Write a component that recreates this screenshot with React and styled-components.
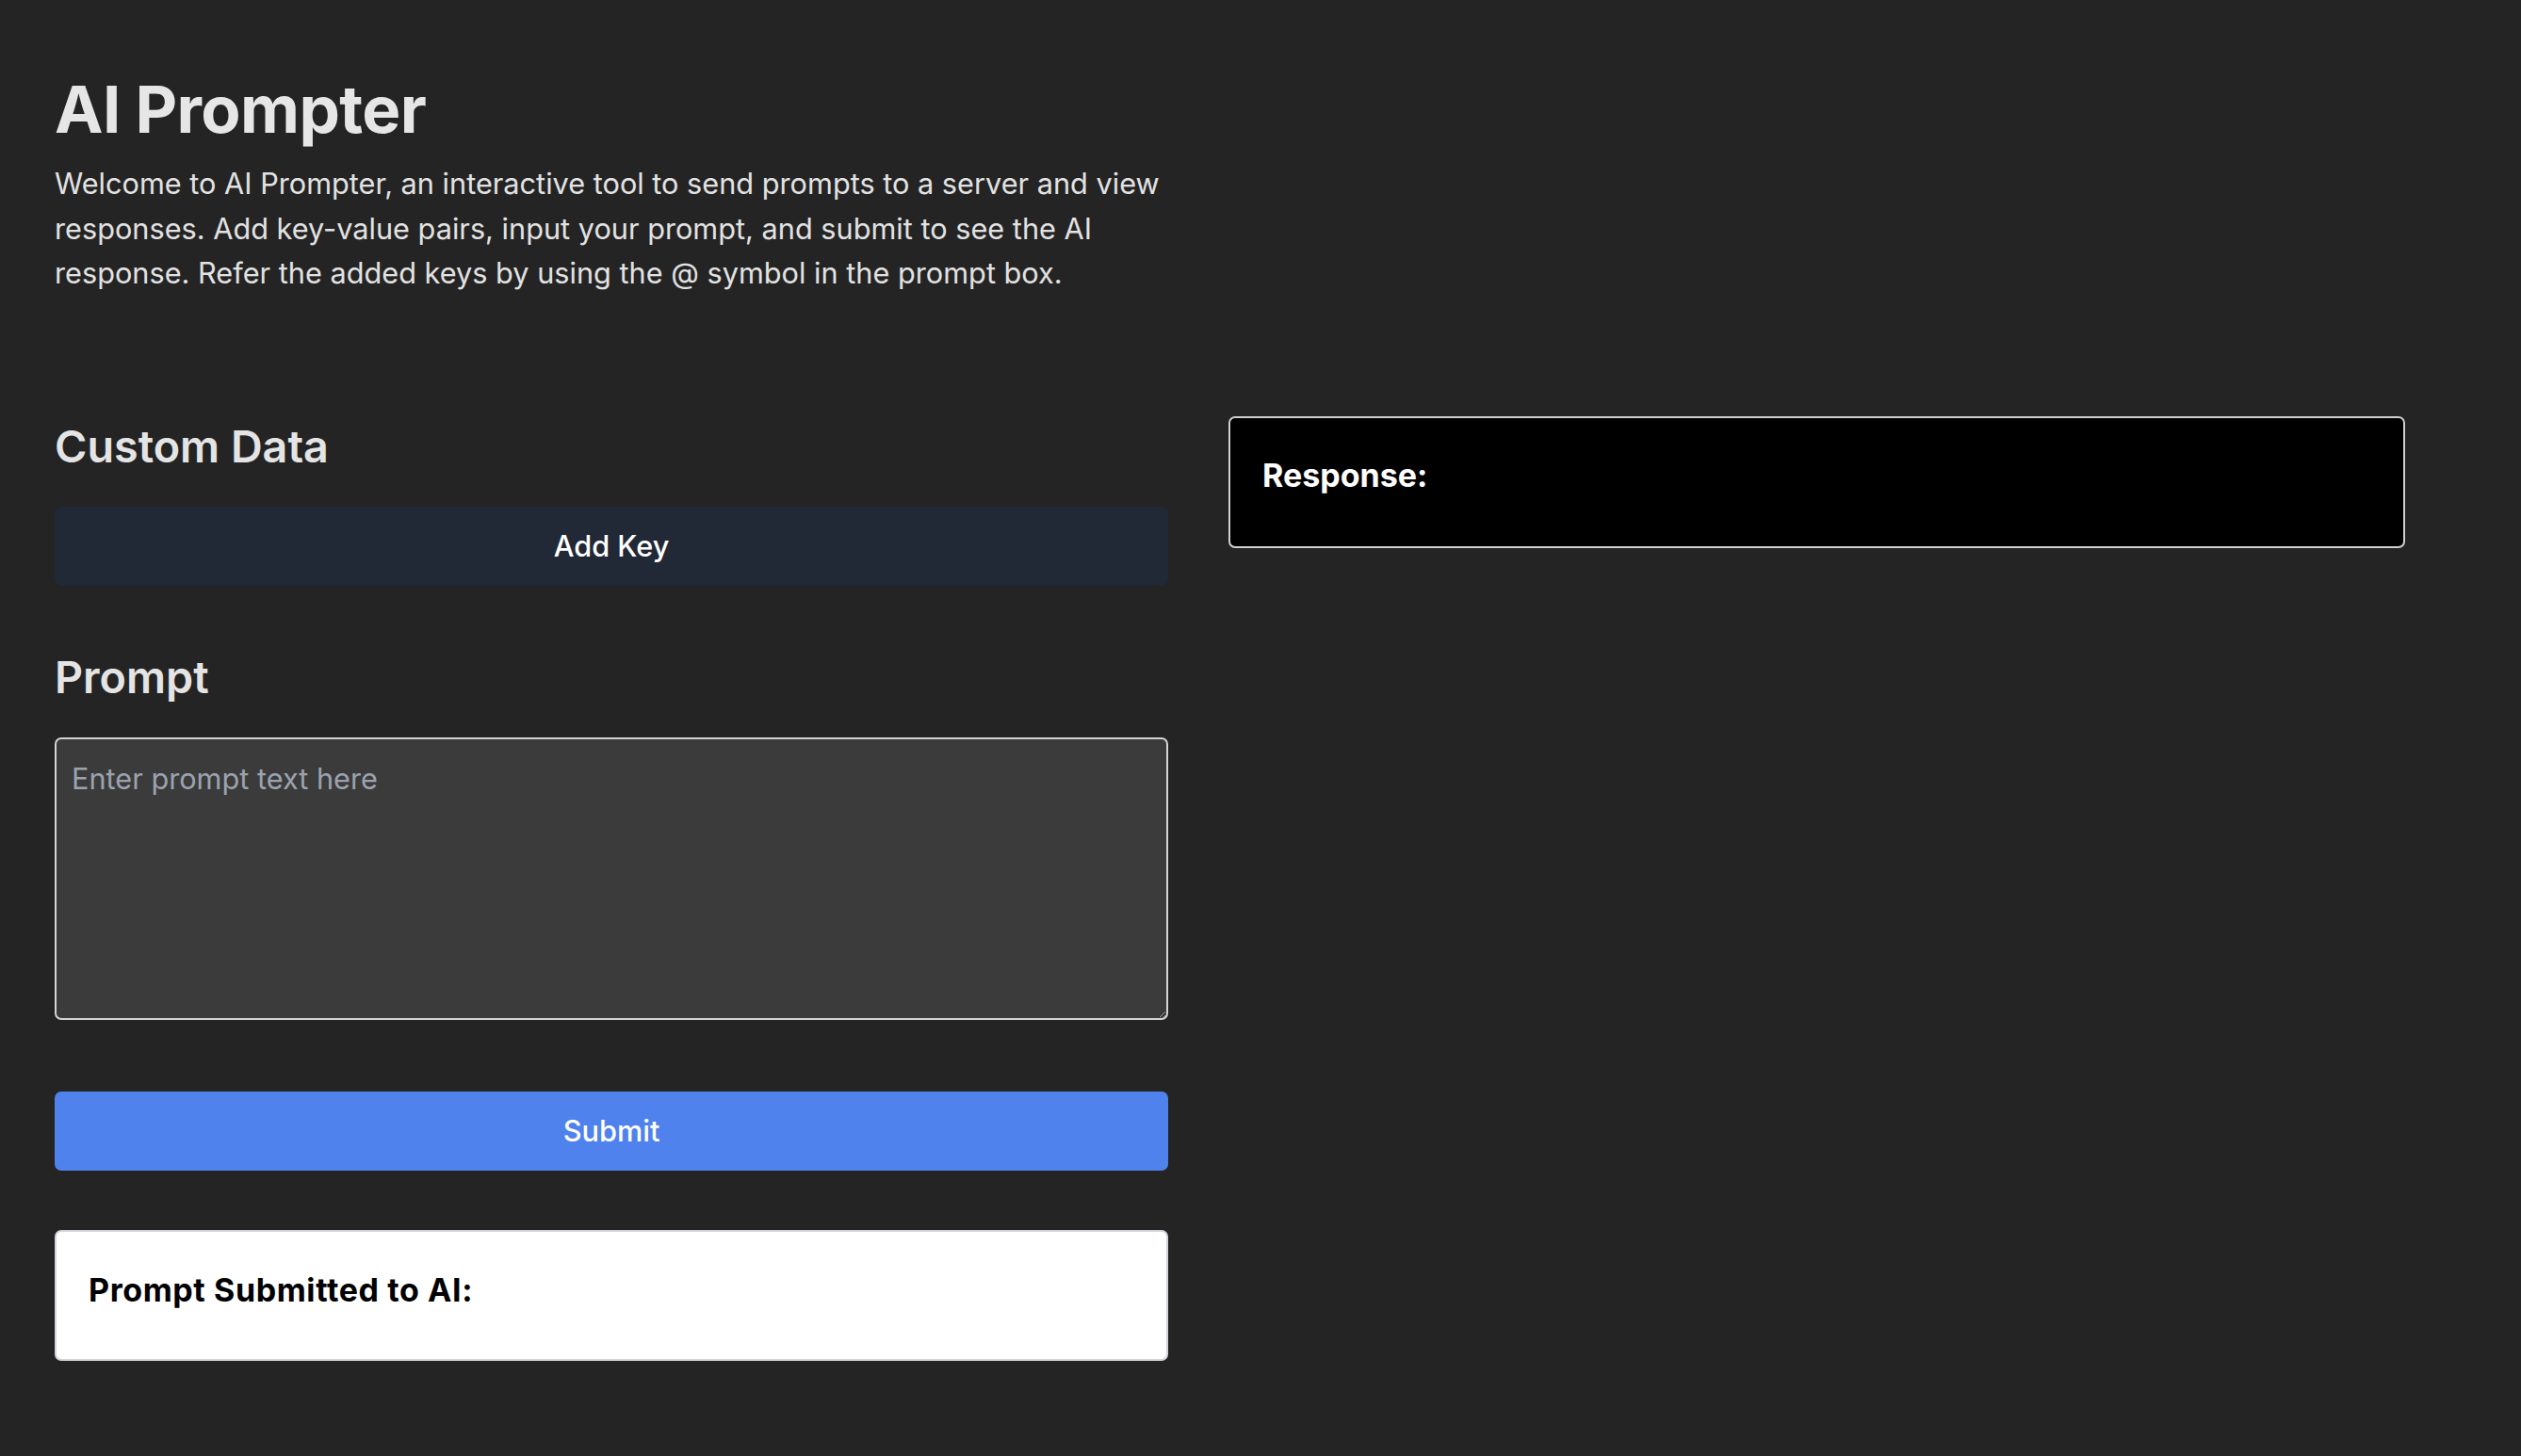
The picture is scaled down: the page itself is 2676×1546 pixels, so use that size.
import React, { useState } from "react";
import styled, { createGlobalStyle } from "styled-components";

const GlobalStyle = createGlobalStyle`
  html, body {
    margin: 0;
    padding: 0;
    background: #242424;
  }
  body {
    font-family: Inter, "Noto Sans", "Liberation Sans", sans-serif;
    color: rgba(255, 255, 255, 0.87);
  }
  * {
    box-sizing: border-box;
  }
`;

const Page = styled.div`
  min-height: 1546px;
  padding: 80px 58px 60px 58px;
  background: #242424;
`;

const Header = styled.header`
  width: 1220px;
`;

const Title = styled.h1`
  margin: 0;
  font-size: 69px;
  line-height: 72px;
  font-weight: 700;
  letter-spacing: -0.6px;
  color: #e6e6e6;
`;

const Intro = styled.p`
  margin: 19px 0 0 0;
  font-size: 30.7px;
  line-height: 47.6px;
  font-weight: 400;
  color: #e2e2e2;
`;

const Columns = styled.div`
  display: flex;
  align-items: flex-start;
  gap: 64px;
  margin-top: 128px;
`;

const LeftColumn = styled.section`
  width: 1182px;
  display: flex;
  flex-direction: column;
`;

const RightColumn = styled.section`
  width: 1249px;
`;

const SectionTitle = styled.h2`
  margin: ${(p) => p.$top || 0}px 0 0 0;
  font-size: 46.7px;
  line-height: 54px;
  font-weight: 600;
  color: #e4e4e4;
`;

const Button = styled.button`
  width: 100%;
  height: 84px;
  border: none;
  border-radius: 7px;
  background: ${(p) => p.$bg};
  color: #ffffff;
  font-family: inherit;
  font-size: 30.7px;
  font-weight: 500;
  cursor: pointer;
  margin-top: ${(p) => p.$top}px;
`;

const PromptInput = styled.textarea`
  width: 100%;
  height: 300px;
  margin-top: 37px;
  padding: 19px 16px;
  background: #3b3b3b;
  border: 2px solid #d4d4d4;
  border-radius: 7px;
  color: #ffffff;
  font-family: inherit;
  font-size: 30.7px;
  line-height: 46px;
  outline: none;
  display: block;

  &::placeholder {
    color: #9ca3af;
  }
`;

const OutputBox = styled.div`
  width: 100%;
  min-height: ${(p) => (p.$dark ? 140 : 139)}px;
  margin-top: ${(p) => p.$top || 0}px;
  padding: ${(p) => (p.$dark ? 34 : 35)}px 34px 46px 34px;
  border: 2px solid ${(p) => (p.$dark ? "#d0d0d0" : "#d1d5db")};
  border-radius: 7px;
  background: ${(p) => (p.$dark ? "#000000" : "#ffffff")};
  color: ${(p) => (p.$dark ? "#ffffff" : "#000000")};
`;

const OutputLabel = styled.h3`
  margin: 0;
  font-size: 34px;
  line-height: 54px;
  font-weight: 700;
  letter-spacing: ${(p) => p.$spread || 0}px;
`;

const OutputText = styled.div`
  font-size: 30.7px;
  line-height: 46px;
  white-space: pre-wrap;
`;

export default function App() {
  const [prompt, setPrompt] = useState("");
  const [submitted, setSubmitted] = useState("");

  return (
    <>
      <GlobalStyle />
      <Page>
        <Header>
          <Title>AI Prompter</Title>
          <Intro>
            Welcome to AI Prompter, an interactive tool to send prompts to a server and view
            responses. Add key-value pairs, input your prompt, and submit to see the AI
            response. Refer the added keys by using the @ symbol in the prompt box.
          </Intro>
        </Header>
        <Columns>
          <LeftColumn>
            <SectionTitle $top={5}>Custom Data</SectionTitle>
            <Button $bg="#212836" $top={37}>Add Key</Button>
            <SectionTitle $top={70}>Prompt</SectionTitle>
            <PromptInput
              placeholder="Enter prompt text here"
              value={prompt}
              onChange={(e) => setPrompt(e.target.value)}
            />
            <Button $bg="#4f82ec" $top={76} onClick={() => setSubmitted(prompt)}>
              Submit
            </Button>
            <OutputBox $top={63}>
              <OutputLabel $spread={0.6}>Prompt Submitted to AI:</OutputLabel>
              {submitted && <OutputText>{submitted}</OutputText>}
            </OutputBox>
          </LeftColumn>
          <RightColumn>
            <OutputBox $dark>
              <OutputLabel>Response:</OutputLabel>
            </OutputBox>
          </RightColumn>
        </Columns>
      </Page>
    </>
  );
}
